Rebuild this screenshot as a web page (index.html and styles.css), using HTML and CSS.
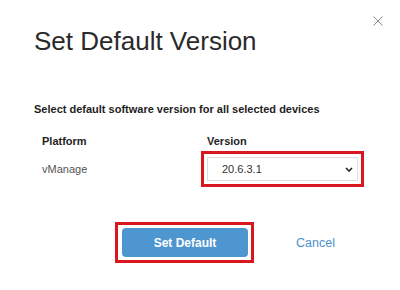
FILE: index.html
```html
<!DOCTYPE html>
<html lang="en">
  <head>
    <meta charset="UTF-8" />
    <meta name="viewport" content="width=device-width, initial-scale=1.0" />
    <title>Set Default Version</title>
    <link rel="stylesheet" href="styles.css">
  </head>
  <body>
    <div class="dialog">
      <div class="header">
        <h1>Set Default Version</h1>
        <button class="close" aria-label="close">
          <svg width="10" height="10" viewBox="0 0 10 10">
            <path d="M0.5 0.5 L9.5 9.5 M9.5 0.5 L0.5 9.5" stroke="#8a8a8a" stroke-width="1" fill="none" />
          </svg>
        </button>
      </div>

      <p class="subtitle">Select default software version for all selected devices</p>

      <div class="table">
        <div class="th">Platform</div>
        <div class="th">Version</div>
        <div class="td">vManage</div>
        <div class="td">
          <div class="select">
            <span>20.6.3.1</span>
            <svg width="8" height="5" viewBox="0 0 8 5">
              <path d="M1 1 L4 4 L7 1" stroke="#222" stroke-width="1.6" fill="none" />
            </svg>
          </div>
        </div>
      </div>

      <div class="footer">
        <div class="mark">
          <button class="primary">Set Default</button>
        </div>
        <button class="link">Cancel</button>
      </div>
    </div>
  </body>
</html>
```

FILE: styles.css
```css
* {
  padding: 0;
  margin: 0;
  box-sizing: border-box;
}
body {
  width: 400px;
  height: 290px;
  background: #fff;
  font-family: "Liberation Sans", Arial, sans-serif;
  color: #222;
  overflow: hidden;
}
.dialog {
  padding: 16px 17px 0 34px;
}
.header {
  display: flex;
  justify-content: space-between;
  align-items: flex-start;
}
.header h1 {
  margin-top: 10px;
  font-size: 26px;
  line-height: 30px;
  font-weight: normal;
  color: #2a2a2a;
}
.close {
  width: 10px;
  height: 10px;
  border: none;
  background: transparent;
  display: flex;
}
.subtitle {
  margin-top: 46px;
  font-size: 11px;
  line-height: 14px;
  font-weight: bold;
  color: #1e1e1e;
}
.table {
  margin-top: 18px;
  padding-left: 8px;
  display: grid;
  grid-template-columns: 165px 151px;
  row-gap: 9px;
  align-items: center;
}
.th {
  font-size: 11px;
  line-height: 14px;
  font-weight: bold;
  color: #1e1e1e;
}
.td {
  font-size: 11px;
  line-height: 14px;
  color: #555;
}
.select {
  height: 24px;
  border: 1px solid #dedede;
  background: #fff;
  display: flex;
  align-items: center;
  justify-content: space-between;
  padding: 0 4px 0 14px;
  color: #333;
  font-size: 11px;
  outline: 3px solid #d9171f;
  outline-offset: 3px;
}
.footer {
  margin-top: 41px;
  padding-left: 81px;
  display: flex;
  align-items: center;
}
.mark {
  border: 3px solid #d9171f;
  padding: 3px 3px 3px 4px;
  display: flex;
}
.primary {
  width: 126px;
  height: 29px;
  border: none;
  border-radius: 4px;
  background: #4e96cf;
  color: #fff;
  font-family: "Liberation Sans", Arial, sans-serif;
  font-size: 12px;
  font-weight: bold;
}
.link {
  margin-left: 42px;
  border: none;
  background: transparent;
  color: #4b92cb;
  font-family: "Liberation Sans", Arial, sans-serif;
  font-size: 12.5px;
}
```
